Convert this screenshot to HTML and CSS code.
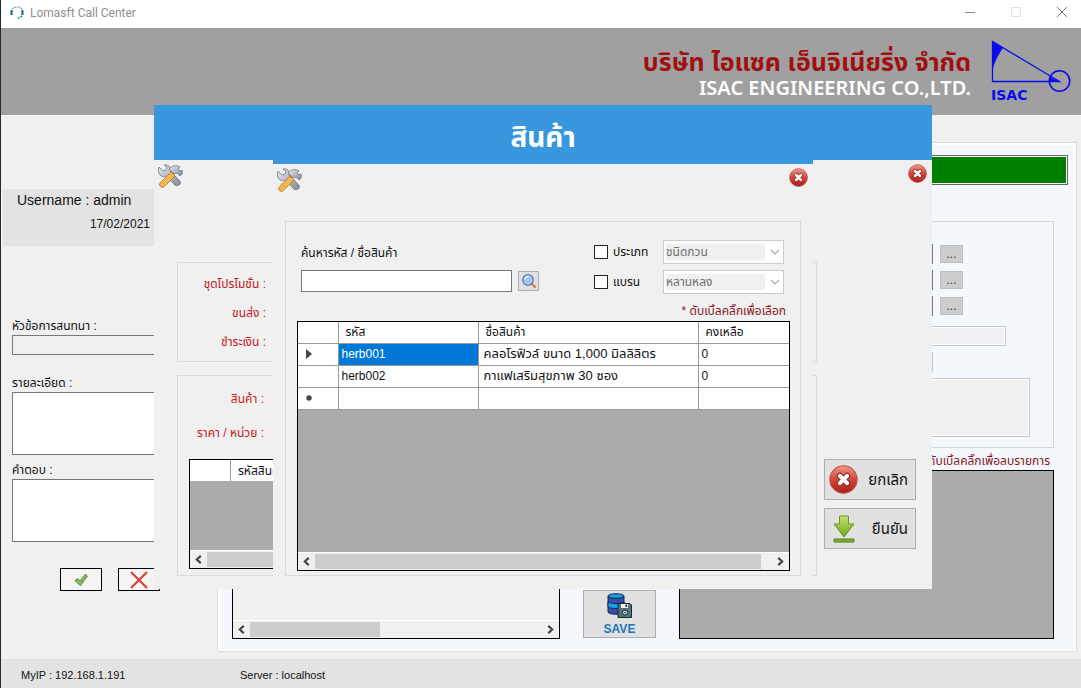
FILE: index.html
```html
<!DOCTYPE html>
<html lang="th">
<head>
<meta charset="utf-8">
<meta name="viewport" content="width=device-width, initial-scale=1">
<title>Lomasft Call Center</title>
<link rel="stylesheet" href="styles.css">
</head>
<body>
<svg class="defs" aria-hidden="true">
  <defs>
    <linearGradient id="red" x1="0" y1="0" x2="0" y2="1"><stop offset="0" stop-color="#ee9a8c"/><stop offset=".45" stop-color="#d84c40"/><stop offset="1" stop-color="#a81c18"/></linearGradient>
    <linearGradient id="green" x1="0" y1="0" x2="0" y2="1"><stop offset="0" stop-color="#c9e070"/><stop offset="1" stop-color="#6ba51a"/></linearGradient>
    <linearGradient id="steel" x1="0" y1="0" x2="1" y2="1"><stop offset="0" stop-color="#e9edf2"/><stop offset="1" stop-color="#7f8893"/></linearGradient>
    <symbol id="i-close" viewBox="0 0 28 28">
      <circle cx="14" cy="14" r="13.2" fill="url(#red)" stroke="#b8564c"/>
      <path d="M10.5 10.5l7 7m0-7l-7 7" stroke="#8c2a24" stroke-width="6" stroke-linecap="round"/>
      <path d="M10.5 10.5l7 7m0-7l-7 7" stroke="#fff" stroke-width="4" stroke-linecap="round"/>
    </symbol>
    <symbol id="i-tools" viewBox="0 0 26 24">
      <path d="M2 3l4 4 3-1 1-3-3-2c4-1 7 2 6 6l9 9c2 2 2 4 0 5s-4 1-5-1L9 12c-5 2-9-2-7-9z" fill="url(#steel)" stroke="#6c7480" stroke-width=".8"/>
      <path d="M12 5c3-4 8-4 11-2l-2 2 2 2 2-1c1 3 0 5-2 6l-3-3-3 1-3-3z" fill="url(#steel)" stroke="#6c7480" stroke-width=".8"/>
      <path d="M14 8l4 4L7.500 22.500c-1.500 1.500-3.500 1-4.500-.500-1-1-.500-2.500.500-3.500z" fill="#f3b552" stroke="#b57a26" stroke-width=".8"/>
    </symbol>
    <symbol id="i-left" viewBox="0 0 8 8"><path d="M6 .800L2.500 4 6 7.200" fill="none" stroke="#444" stroke-width="1.900"/></symbol>
    <symbol id="i-right" viewBox="0 0 8 8"><path d="M2 .800l3.500 3.200L2 7.200" fill="none" stroke="#444" stroke-width="1.900"/></symbol>
    <symbol id="i-down" viewBox="0 0 10 6"><path d="M1 1l4 4 4-4" fill="none" stroke="#aaa" stroke-width="1.200"/></symbol>
  </defs>
</svg>

<div class="app">
  <header class="titlebar">
    <svg class="app-icon" viewBox="0 0 16 16"><path d="M3 11V6C3 2 13 2 13 6v5" fill="none" stroke="#6f8f9d" stroke-width="1.200" stroke-dasharray="2 1"/><path d="M2.500 6v5M13.500 6v5" stroke="#1f6d8d" stroke-width="2"/><path d="M13 12l-4 2.500" stroke="#3b8796" stroke-width="1.500" stroke-dasharray="2 1"/></svg>
    <h1 class="app-name">Lomasft Call Center</h1>
    <div class="window-tools">
      <button class="wbtn" aria-label="Minimize"><svg viewBox="0 0 12 12"><path d="M1 6.500h10" stroke="#888"/></svg></button>
      <button class="wbtn" aria-label="Maximize" disabled><svg viewBox="0 0 12 12"><path d="M1.500 1.500h9v9h-9z" fill="none" stroke="#e2e2e2"/></svg></button>
      <button class="wbtn" aria-label="Close"><svg viewBox="0 0 12 12"><path d="M1 1l10 10M11 1L1 11" stroke="#777"/></svg></button>
    </div>
  </header>

  <div class="banner">
    <div class="company">
      <p class="company-th">บริษัท ไอแซค เอ็นจิเนียริ่ง จำกัด</p>
      <p class="company-en">ISAC ENGINEERING CO.,LTD.</p>
    </div>
    <svg class="logo" viewBox="0 0 80 62" role="img" aria-label="ISAC">
      <g fill="none" stroke="#0a0af0" stroke-width="1.300"><path d="M1.500 1.500v40h67z"/><circle cx="68.500" cy="41" r="10.200" stroke-width="1.600"/></g>
      <path d="M1 1l11 7C7 15 4 21 1.500 30zM58 41.500h10L59 37z" fill="#0a0af0"/>
      <text class="logo-text" x="0" y="60">ISAC</text>
    </svg>
  </div>

  <main class="main">
    <aside class="side">
      <div class="user">
        <p class="user-name">Username : admin</p>
        <p class="user-date">17/02/2021</p>
      </div>
      <form class="talk">
        <label for="topic">หัวข้อการสนทนา :</label>
        <input id="topic" class="topic" readonly>
        <label for="detail">รายละเอียด :</label>
        <textarea id="detail" class="area"></textarea>
        <label for="answer">คำตอบ :</label>
        <textarea id="answer" class="area"></textarea>
        <div class="talk-actions">
          <button type="button" class="mini" aria-label="ตกลง"><svg viewBox="0 0 14 14"><path d="M.800 7.500l3-2 2.200 2.700L11.200 1.300 13.500 3 6.500 12.700z" fill="#86c053" stroke="#437c24" stroke-width=".8"/></svg></button>
          <button type="button" class="mini" aria-label="ยกเลิก"><svg class="cross" viewBox="0 0 18 18"><path d="M1 1l16 16M17 1L1 17" stroke="#d6433b" stroke-width="2.200"/></svg></button>
        </div>
      </form>
    </aside>

    <section class="order">
      <div class="total"></div>
      <div class="order-form">
        <div class="pick"><input aria-label="รหัส" class="pick-input"><button class="dots">...</button></div>
        <div class="pick"><input aria-label="ชื่อ" class="pick-input"><button class="dots">...</button></div>
        <div class="pick"><input aria-label="ที่อยู่" class="pick-input"><button class="dots">...</button></div>
        <input aria-label="โทร" class="soft soft-wide" disabled>
        <input aria-label="จำนวน" class="soft soft-short">
        <textarea aria-label="หมายเหตุ" class="soft soft-area" disabled></textarea>
      </div>
      <div class="order-bottom">
        <div class="grid-box list">
          <div class="scroll"><svg><use href="#i-left"/></svg><i class="thumb thumb-part"></i><svg><use href="#i-right"/></svg></div>
        </div>
        <button class="save">
          <svg viewBox="0 0 25 25"><g stroke="#16254f" stroke-width="1"><path d="M1 3v16c0 3 16 3 16 0V3z" fill="#334fae"/><path d="M1 9c3 2 13 2 16 0v5c-3 2-13 2-16 0z" fill="#16a0ea"/><ellipse cx="9" cy="3" rx="8" ry="2.300" fill="#16a0ea"/><path d="M11 10.500h12l1.500 1.500v12.500H11z" fill="#51737b" stroke="#142a30"/></g><path d="M14 11h7v4h-7z" fill="#f3f3f3"/><path d="M18.500 11.500h1.500v2.500h-1.500z" fill="#222"/><circle cx="18" cy="19.500" r="2.500" fill="#d8dde0" stroke="#142a30"/><circle cx="18" cy="19.500" r=".8" fill="#142a30"/></svg>
          SAVE
        </button>
        <div class="items">
          <p class="hint">* ดับเบิ้ลคลิ๊กเพื่อลบรายการ</p>
          <div class="grid-box items-box"></div>
        </div>
      </div>
    </section>
  </main>

  <footer class="status"><span class="ip">MyIP : 192.168.1.191</span><span>Server : localhost</span></footer>

  <section class="dialog promo" aria-label="รายการ">
    <div class="dialog-head promo-head"></div>
    <div class="dialog-tools"><svg class="tools"><use href="#i-tools"/></svg><button class="x" aria-label="ปิด"><svg><use href="#i-close"/></svg></button></div>
    <div class="promo-body">
      <div class="promo-groups">
        <div class="group promo-set">
          <p>ชุดโปรโมชั่น :</p><p>ขนส่ง :</p><p>ชำระเงิน :</p>
        </div>
        <div class="group promo-item">
          <p>สินค้า :</p><p>ราคา / หน่วย :</p>
          <div class="grid-box promo-grid">
            <div class="promo-row"><span class="promo-gap"></span><span class="promo-col">รหัสสินค้า</span></div>
            <div class="scroll"><svg><use href="#i-left"/></svg><i class="thumb"></i><svg><use href="#i-right"/></svg></div>
          </div>
        </div>
      </div>
      <div class="promo-actions">
        <button class="big"><svg class="big-x"><use href="#i-close"/></svg>ยกเลิก</button>
        <button class="big"><svg class="big-down" viewBox="0 0 22 28"><path d="M6.500 1h9v8H21L11 22 1 9h5.500z" fill="url(#green)" stroke="#6b9420"/><path d="M1 24h20v3H1z" fill="#7fb52a" stroke="#547c16"/></svg>ยืนยัน</button>
      </div>
    </div>
  </section>

  <section class="dialog product" aria-labelledby="product-title">
    <h2 class="dialog-head product-head" id="product-title">สินค้า</h2>
    <div class="dialog-tools"><svg class="tools"><use href="#i-tools"/></svg><button class="x" aria-label="ปิด"><svg><use href="#i-close"/></svg></button></div>
    <div class="group finder">
      <div class="filters">
        <div class="search">
          <label for="q">ค้นหารหัส / ชื่อสินค้า</label>
          <div class="search-row">
            <input id="q" class="search-input">
            <button class="search-btn" aria-label="ค้นหา"><svg viewBox="0 0 16 16"><path d="M11 11l3 3" stroke="#d08a62" stroke-width="2.500" stroke-linecap="round"/><circle cx="7" cy="7" r="5.300" fill="#9fc9f0" stroke="#5c7fb4" stroke-width="1.300"/><path d="M4 6.500c0-2 2-3 3.500-3" stroke="#eaf5ff" stroke-width="1.300" fill="none"/></svg></button>
          </div>
        </div>
        <div class="options">
          <label class="check"><input type="checkbox">ประเภท</label>
          <div class="drop"><select aria-label="ประเภท" disabled><option>ชนิดกวน</option></select><svg><use href="#i-down"/></svg></div>
          <label class="check"><input type="checkbox">แบรน</label>
          <div class="drop"><select aria-label="แบรน" disabled><option>หลานหลง</option></select><svg><use href="#i-down"/></svg></div>
        </div>
      </div>
      <p class="hint finder-hint">* ดับเบิ้ลคลิ๊กเพื่อเลือก</p>
      <div class="grid-box finder-grid">
        <table class="table">
          <colgroup><col class="c-mark"><col class="c-code"><col class="c-name"><col></colgroup>
          <thead><tr><th></th><th>รหัส</th><th>ชื่อสินค้า</th><th>คงเหลือ</th></tr></thead>
          <tbody>
            <tr><td class="mark"><svg viewBox="0 0 6 10"><path d="M0 0l6 5-6 5z" fill="#444"/></svg></td><td class="picked">herb001</td><td class="th">คลอโรฟิวล์ ขนาด 1,000 มิลลิลิตร</td><td>0</td></tr>
            <tr><td></td><td>herb002</td><td class="th">กาแฟเสริมสุขภาพ 30 ซอง</td><td>0</td></tr>
            <tr><td class="mark"><svg viewBox="0 0 6 10"><circle cx="3" cy="5" r="2.700" fill="#444"/></svg></td><td></td><td></td><td></td></tr>
          </tbody>
        </table>
        <div class="scroll"><svg><use href="#i-left"/></svg><i class="thumb thumb-most"></i><svg><use href="#i-right"/></svg></div>
      </div>
    </div>
  </section>
</div>
</body>
</html>
```

FILE: styles.css
```css
* { box-sizing: border-box; }
body { margin: 0; background: #f0f0f0; color: #111; font: 12px/16px "Liberation Sans", "Noto Sans Thai", sans-serif; }
h1, h2, p { margin: 0; font-weight: 400; }
button, input, textarea, select { margin: 0; padding: 0; border-radius: 0; font: inherit; color: inherit; }
textarea { display: block; resize: none; }
svg { display: block; flex: none; }
.defs { position: absolute; width: 0; height: 0; }

.app { position: relative; display: flex; flex-direction: column; min-height: 100vh; border-left: 1px solid #2a2a2a; overflow: hidden; }

.titlebar { display: flex; align-items: center; height: 28px; padding: 0 12px 4px 8px; background: #fff; }
.app-icon { width: 16px; height: 16px; }
.app-name { margin-left: 5px; padding-top: 2px; font: 12px/16px Roboto, sans-serif; color: #8d8d8d; }
.window-tools { display: flex; gap: 32px; margin-left: auto; }
.wbtn { width: 14px; height: 14px; border: 0; background: none; }
.wbtn svg { width: 12px; height: 12px; margin: 1px; }

.banner { display: flex; justify-content: flex-end; align-items: flex-start; gap: 20px; height: 87px; padding: 12px 10px 0 0; background: #a0a0a0; }
.company { padding-top: 6px; text-align: right; }
.company-th { font: 700 25px/30px "Noto Sans", "Noto Sans Thai", sans-serif; color: #a01010; }
.company-en { font: 600 20px/24px "Noto Sans", sans-serif; color: #fff; }
.logo { width: 80px; height: 62px; }
.logo-text { font: 700 14px "DejaVu Sans", sans-serif; fill: #0a0af0; }

.main { flex: 1; display: flex; padding: 27px 4px 7px 2px; }
.side { width: 214px; padding-top: 47px; }
.user { height: 57px; padding: 3px 67px 0 14px; background: #e3e3e3; }
.user-name { font-size: 14px; }
.user-date { margin-top: 8px; text-align: right; }
.talk { display: flex; flex-direction: column; padding: 72px 8px 0 9px; }
.talk label { line-height: 17px; }
.topic { height: 20px; margin-bottom: 20px; border: 1px solid #777; background: #f0f0f0; }
.area { height: 63px; margin-bottom: 7px; border: 1px solid #777; background: #fff; }
.talk-actions { display: flex; gap: 16px; padding: 19px 0 0 48px; }
.mini { display: grid; place-items: center; width: 42px; height: 23px; border: 1px solid #000; background: #f4f4f4; }
.mini svg { width: 14px; height: 14px; }
.mini .cross { width: 18px; height: 18px; }

.order { flex: 1; display: flex; flex-direction: column; padding: 12px 22px 12px 14px; border: 1px solid #d8dcde; outline: 2px solid #fff; outline-offset: -3px; background: #f4f8fd; }
.total { height: 30px; margin-right: -14px; border: 1px solid #666; background: #008000; box-shadow: inset 0 0 0 1px #fff; }
.order-form { display: flex; flex-direction: column; align-items: flex-end; height: 227px; margin-top: 36px; padding: 22px 23px 0 0; border: 1px solid #d3d7db; }
.pick { display: flex; align-items: center; gap: 7px; height: 20px; margin: 0 67px 6px 0; }
.pick-input { width: 240px; height: 20px; border: 1px solid #777; background: #fff; }
.dots { width: 23px; height: 18px; border: 1px solid #bfbfbf; background: #ccc; line-height: 16px; color: #333; }
.soft { border: 1px solid #c4c8cc; outline: 1px solid #fff; outline-offset: -2px; background: #f0f0f0; }
.soft-wide { width: 360px; height: 20px; margin: 4px 24px 6px 0; }
.soft-short { width: 200px; height: 20px; margin: 0 97px 6px 0; }
.soft-area { width: 420px; height: 59px; }
.order-bottom { flex: 1; display: flex; align-items: flex-end; gap: 23px; }
.grid-box { display: flex; flex-direction: column; border: 1px solid #000; background: #ababab; }
.list { flex: 1; height: 140px; background: #f0f0f0; }
.items { width: 375px; height: 186px; display: flex; flex-direction: column; }
.items-box { flex: 1; }
.hint { text-align: right; color: #8b1620; line-height: 17px; padding-right: 4px; }
.scroll { display: flex; align-items: center; gap: 4px; height: 18px; margin-top: auto; padding: 1px 4px; background: #f0f0f0; border-top: 1px solid #fff; }
.scroll svg { width: 9px; height: 9px; }
.scroll svg:last-child { margin-left: auto; }
.thumb { flex: 1; height: 15px; background: #cdcdcd; }
.thumb-part { flex: 0 0 130px; }
.thumb-most { margin-right: 11px; }
.save { display: flex; flex-direction: column; align-items: center; gap: 3px; width: 73px; height: 48px; margin-bottom: 1px; padding-top: 2px; border: 1px solid #adadad; background: #e1e1e1; color: #1a76bd; font-weight: 700; }
.save svg { width: 25px; height: 25px; }

.status { display: flex; align-items: center; height: 29px; padding: 3px 20px 0; background: #e3e3e3; font-size: 11px; }
.ip { width: 219px; }

/* floating windows */
.dialog { position: absolute; display: flex; flex-direction: column; background: #f0f0f0; }
.promo { left: 153px; top: 105px; width: 778px; height: 484px; }
.product { left: 272px; top: 106px; width: 540px; height: 483px; padding-bottom: 13px; }
.dialog-head { background: #3897dd; color: #fff; text-align: center; }
.promo-head { height: 55px; }
.product-head { height: 58px; font: 700 28px/60px "Noto Sans", "Noto Sans Thai", sans-serif; }
.dialog-tools { display: flex; justify-content: space-between; align-items: flex-start; height: 29px; padding: 4px 5px 0 3px; }
.tools { width: 26px; height: 24px; }
.x { width: 19px; height: 19px; border: 0; background: none; }
.x svg { width: 19px; height: 19px; }
.group { border: 1px solid #dadada; }
.promo-body { display: flex; gap: 7px; padding: 73px 16px 0 23px; }
.promo-groups { display: flex; flex-direction: column; gap: 13px; width: 640px; }
.promo-groups p { width: 88px; text-align: right; color: #c4161c; }
.promo-set { display: flex; flex-direction: column; gap: 13px; height: 100px; padding-top: 13px; }
.promo-item { display: flex; flex-direction: column; gap: 18px; height: 201px; padding: 15px 11px 6px; }
.promo-item p { width: 75px; }
.promo-grid { height: 110px; }
.promo-row { display: flex; height: 21px; background: #fff; line-height: 22px; }
.promo-gap { width: 41px; border-right: 1px solid #999; }
.promo-col { padding-left: 7px; }
.promo-actions { flex: 1; display: flex; flex-direction: column; gap: 8px; padding-top: 197px; }
.big { display: flex; align-items: center; justify-content: space-between; height: 41px; padding: 0 7px 0 4px; border: 1px solid #adadad; background: #e1e1e1; font-size: 15px; }
.big-x { width: 29px; height: 29px; }
.big-down { width: 22px; height: 28px; margin-left: 4px; }

.finder { flex: 1; display: flex; flex-direction: column; margin: 28px 12px 0; padding: 18px 10px 4px 11px; }
.filters { display: flex; justify-content: space-between; padding: 0 6px 0 4px; }
.search { padding-top: 5px; }
.search-row { display: flex; align-items: center; gap: 6px; margin-top: 9px; }
.search-input { width: 211px; height: 22px; border: 1px solid #777; background: #fff; }
.search-btn { display: grid; place-items: center; width: 21px; height: 20px; border: 1px solid #adadad; background: #e1e1e1; }
.search-btn svg { width: 16px; height: 16px; }
.options { display: grid; grid-template-columns: 69px 121px; row-gap: 6px; align-items: center; }
.check { display: flex; align-items: center; gap: 5px; }
.check input { appearance: none; width: 14px; height: 14px; border: 1px solid #222; background: #fff; }
.drop { display: grid; align-items: center; }
.drop > * { grid-area: 1 / 1; }
.drop select { appearance: none; height: 24px; padding: 3px 18px 3px 2px; border: 1px solid #ccc; background: linear-gradient(#f0f0f0, #f0f0f0) content-box, #fff; color: #6d6d6d; opacity: 1; }
.drop svg { width: 10px; height: 6px; justify-self: end; margin-right: 4px; }
.finder-hint { padding: 9px 4px 1px 0; }
.finder-grid { flex: 1; }
.table { width: 100%; table-layout: fixed; border-collapse: collapse; background: #fff; }
.c-mark { width: 40px; }
.c-code { width: 140px; }
.c-name { width: 220px; }
.table th, .table td { height: 22px; padding: 0 0 0 3px; border: solid #999; border-width: 0 0 1px 1px; text-align: left; font-weight: 400; line-height: 16px; white-space: nowrap; overflow: hidden; }
.table th { height: 21px; padding-left: 7px; }
.table th:first-child, .table td:first-child { border-left: 0; }
.table td.th { padding-left: 5px; font-size: 13px; }
.table .picked { background: #0078d7; color: #fff; }
.mark svg { width: 6px; height: 10px; margin-left: 5px; }
```
